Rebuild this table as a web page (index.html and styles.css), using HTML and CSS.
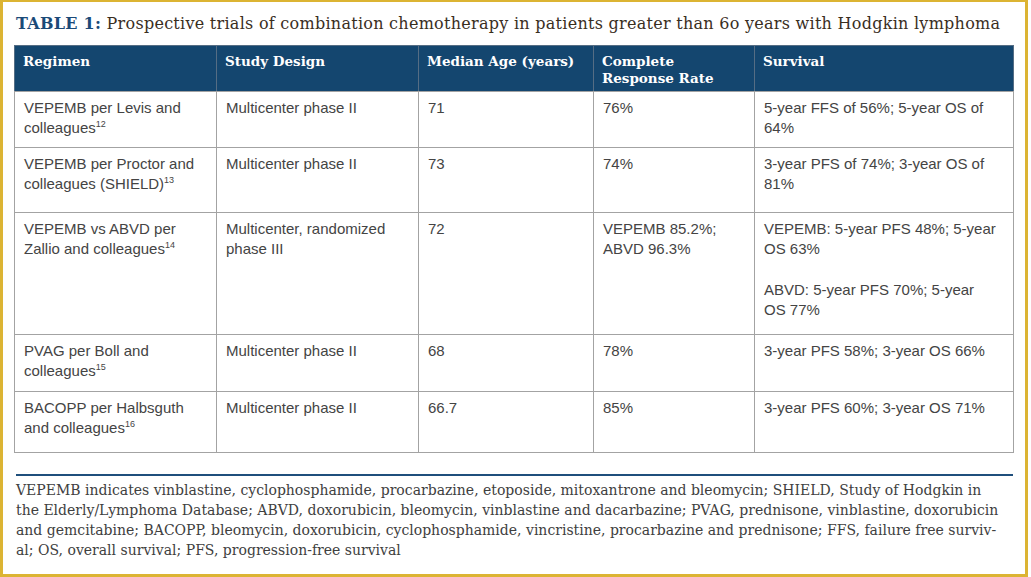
FILE: index.html
```html
<!DOCTYPE html>
<html lang="en">
<head>
<meta charset="utf-8">
<title>Table 1</title>
<link rel="stylesheet" href="styles.css">
</head>
<body>
<div class="frame">
  <h1 class="title"><span class="label">TABLE 1:</span> Prospective trials of combination chemotherapy in patients greater than 6o years with Hodgkin lymphoma</h1>
  <table class="trials">
    <colgroup>
      <col class="c1"><col class="c2"><col class="c3"><col class="c4"><col class="c5">
    </colgroup>
    <thead>
      <tr>
        <th>Regimen</th>
        <th>Study Design</th>
        <th>Median Age (years)</th>
        <th>Complete<br>Response Rate</th>
        <th>Survival</th>
      </tr>
    </thead>
    <tbody>
      <tr class="r1">
        <td>VEPEMB per Levis and colleagues<sup>12</sup></td>
        <td>Multicenter phase II</td>
        <td>71</td>
        <td>76%</td>
        <td>5-year FFS of 56%; 5-year OS of 64%</td>
      </tr>
      <tr class="r2">
        <td>VEPEMB per Proctor and colleagues (SHIELD)<sup>13</sup></td>
        <td>Multicenter phase II</td>
        <td>73</td>
        <td>74%</td>
        <td>3-year PFS of 74%; 3-year OS of 81%</td>
      </tr>
      <tr class="r3">
        <td>VEPEMB vs ABVD per Zallio and colleagues<sup>14</sup></td>
        <td>Multicenter, randomized phase III</td>
        <td>72</td>
        <td>VEPEMB 85.2%;<br>ABVD 96.3%</td>
        <td><p>VEPEMB: 5-year PFS 48%; 5-year OS 63%</p><p>ABVD: 5-year PFS 70%; 5-year OS 77%</p></td>
      </tr>
      <tr class="r4">
        <td>PVAG per Boll and colleagues<sup>15</sup></td>
        <td>Multicenter phase II</td>
        <td>68</td>
        <td>78%</td>
        <td>3-year PFS 58%; 3-year OS 66%</td>
      </tr>
      <tr class="r5">
        <td>BACOPP per Halbsguth and colleagues<sup>16</sup></td>
        <td>Multicenter phase II</td>
        <td>66.7</td>
        <td>85%</td>
        <td>3-year PFS 60%; 3-year OS 71%</td>
      </tr>
    </tbody>
  </table>
  <div class="notes">
    <p>VEPEMB indicates vinblastine, cyclophosphamide, procarbazine, etoposide, mitoxantrone and bleomycin; SHIELD, Study of Hodgkin in<br>the Elderly/Lymphoma Database; ABVD, doxorubicin, bleomycin, vinblastine and dacarbazine; PVAG, prednisone, vinblastine, doxorubicin<br>and gemcitabine; BACOPP, bleomycin, doxorubicin, cyclophosphamide, vincristine, procarbazine and prednisone; FFS, failure free surviv-<br>al; OS, overall survival; PFS, progression-free survival</p>
  </div>
</div>
</body>
</html>
```

FILE: styles.css
```css
html, body {
  margin: 0;
  padding: 0;
  background: #ffffff;
}

.frame {
  box-sizing: border-box;
  width: 1028px;
  height: 577px;
  border: 3px solid #dcb433;
  border-top-width: 2px;
  padding: 12px 10px 0 11px;
  background: #ffffff;
}

.title {
  margin: 0 0 11px 2px;
  font-family: "DejaVu Serif", serif;
  font-weight: normal;
  font-size: 16px;
  letter-spacing: 0.27px;
  line-height: 20px;
  color: #3a2e1e;
  white-space: nowrap;
}

.title .label {
  font-weight: bold;
  color: #1b4a78;
}

.trials {
  width: 999px;
  border-collapse: collapse;
  table-layout: fixed;
  border: 1px solid #a3a3a3;
}

.c1 { width: 202px; }
.c2 { width: 202px; }
.c3 { width: 175px; }
.c4 { width: 161px; }
.c5 { width: 259px; }

.trials th {
  background: #14466f;
  color: #ffffff;
  font-family: "DejaVu Serif", serif;
  font-weight: bold;
  font-size: 13.5px;
  line-height: 17px;
  text-align: left;
  vertical-align: top;
  padding: 7px 8px 0 8px;
  height: 38px;
  border: 1px solid #556d84;
  border-bottom-color: #a3a3a3;
}

.trials td {
  font-family: "Liberation Sans", Arial, sans-serif;
  font-size: 15px;
  line-height: 20px;
  color: #444444;
  vertical-align: top;
  padding: 6px 14px 0 9px;
  border: 1px solid #a3a3a3;
}

.trials td p {
  margin: 0 0 21px 0;
}

.trials td p:last-child {
  margin-bottom: 0;
}

.trials sup {
  font-size: 9px;
  line-height: 0;
  vertical-align: 6px;
}

.r1 td { height: 49px; }
.r2 td { height: 58px; }
.r3 td { height: 115px; }
.r4 td { height: 50px; }
.r5 td { height: 54px; }

.notes {
  margin: 21px 0 0 2px;
  border-top: 2px solid #1f4f7c;
  width: 997px;
}

.notes p {
  margin: 4px 0 0 0;
  font-family: "DejaVu Serif", serif;
  font-size: 14px;
  line-height: 20px;
  color: #404040;
  white-space: nowrap;
}
```
